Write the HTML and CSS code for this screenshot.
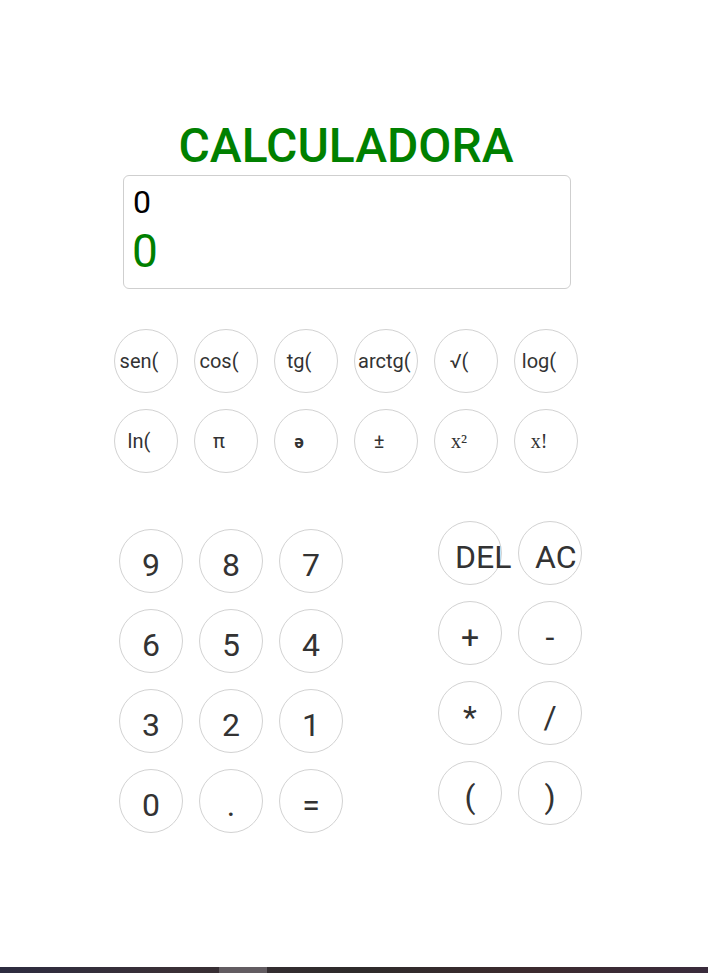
FILE: index.html
```html
<!DOCTYPE html>
<html lang="es">
<head>
<meta charset="utf-8">
<title>Calculadora</title>
<link rel="stylesheet" href="styles.css">
</head>
<body>
<main class="app">
  <h1 class="title">CALCULADORA</h1>
  <section class="display">
    <div class="expr">0</div>
    <div class="result">0</div>
  </section>
  <section class="funcs">
    <button class="key fn">sen(</button>
    <button class="key fn">cos(</button>
    <button class="key fn">tg(</button>
    <button class="key fn">arctg(</button>
    <button class="key fn">√(</button>
    <button class="key fn">log(</button>
    <button class="key fn">ln(</button>
    <button class="key fn">π</button>
    <button class="key fn schwa">ə</button>
    <button class="key fn">±</button>
    <button class="key fn serif">x²</button>
    <button class="key fn serif">x!</button>
  </section>
  <section class="keypad">
    <div class="nums">
      <button class="key big">9</button>
      <button class="key big">8</button>
      <button class="key big">7</button>
      <button class="key big">6</button>
      <button class="key big">5</button>
      <button class="key big">4</button>
      <button class="key big">3</button>
      <button class="key big">2</button>
      <button class="key big">1</button>
      <button class="key big">0</button>
      <button class="key big">.</button>
      <button class="key big">=</button>
    </div>
    <div class="ops">
      <button class="key big">DEL</button>
      <button class="key big">AC</button>
      <button class="key big">+</button>
      <button class="key big">-</button>
      <button class="key big">*</button>
      <button class="key big">/</button>
      <button class="key big">(</button>
      <button class="key big">)</button>
    </div>
  </section>
</main>
<footer class="taskbar"><span class="task-active"></span></footer>
</body>
</html>
```
FILE: styles.css
```css
html, body {
  margin: 0;
  padding: 0;
  background: #fff;
}
body {
  min-height: 100vh;
  display: flex;
  flex-direction: column;
  font-family: Roboto, "Liberation Sans", sans-serif;
}
.app {
  flex: 1;
  width: 464px;
  margin-left: 114px;
  padding-top: 118px;
}
.title {
  margin: 0 0 1px 0;
  font-size: 48px;
  line-height: 56px;
  font-weight: 500;
  color: #008000;
  text-align: center;
}
.display {
  box-sizing: border-box;
  width: 448px;
  height: 114px;
  margin-left: 9px;
  border: 1px solid #cfcfcf;
  border-radius: 6px;
  padding: 8px 8px 0 8px;
}
.expr {
  font-size: 32px;
  line-height: 37px;
  color: #000;
  padding-left: 1px;
}
.result {
  margin-top: 3px;
  font-size: 46px;
  line-height: 54px;
  color: #008000;
}
.funcs {
  margin-top: 40px;
  display: grid;
  grid-template-columns: repeat(6, 64px);
  gap: 16px;
}
.key {
  box-sizing: border-box;
  width: 64px;
  height: 64px;
  border: 1px solid #d2d2d2;
  border-radius: 50%;
  background: #fff;
  color: #333;
  font-family: Roboto, "Liberation Sans", sans-serif;
  margin: 0;
  white-space: nowrap;
  text-align: center;
}
.fn {
  font-size: 20px;
  padding: 0 17px 0 3px;
}
.schwa {
  font-weight: 700;
  font-size: 18px;
}
.serif {
  font-family: "Liberation Serif", "DejaVu Serif", serif;
}
.big {
  font-size: 32px;
  padding: 7px 16px 0 16px;
}
.keypad {
  margin-top: 48px;
  display: flex;
  align-items: flex-start;
}
.nums {
  margin-top: 8px;
  margin-left: 5px;
  display: grid;
  grid-template-columns: repeat(3, 64px);
  gap: 16px;
}
.ops {
  margin-left: 95px;
  display: grid;
  grid-template-columns: repeat(2, 64px);
  gap: 16px;
}
.taskbar {
  height: 6px;
  background: linear-gradient(90deg, #2d2c40 0%, #3a3036 25%, #2e2b2b 50%, #3c2a2e 75%, #3a2b3c 100%);
  position: relative;
}
.task-active {
  position: absolute;
  left: 219px;
  top: 0;
  width: 48px;
  height: 6px;
  background: #625c61;
}
```
